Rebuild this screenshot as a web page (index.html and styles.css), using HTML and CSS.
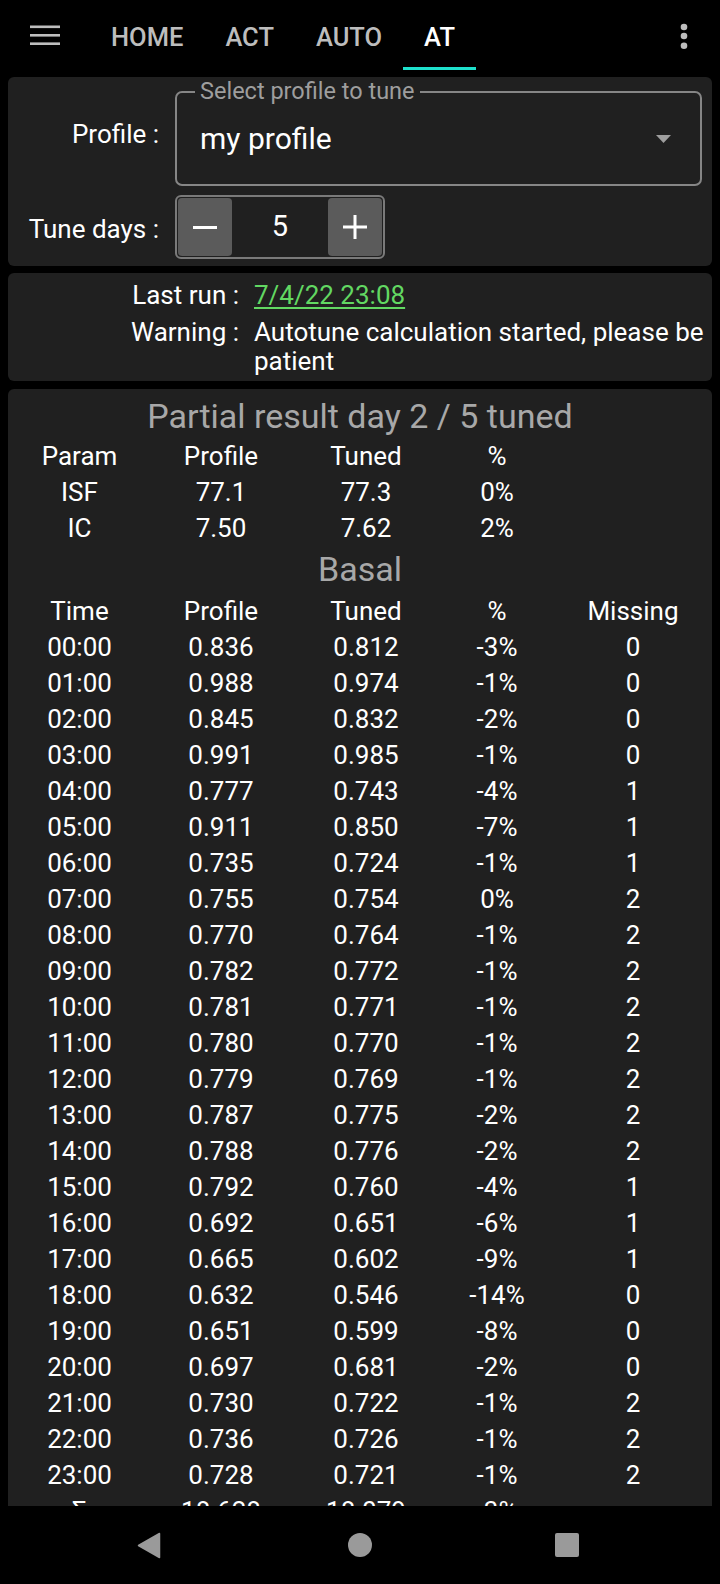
FILE: index.html
```html
<!DOCTYPE html>
<html>
<head>
<meta charset="utf-8">
<title>Autotune</title>
<link rel="stylesheet" href="styles.css">
</head>
<body>
<div class="screen">
  <header class="appbar">
    <div class="menu">
      <svg width="30" height="20" viewBox="0 0 30 20"><rect x="0" y="0.5" width="30" height="2.6" fill="#bdbdbd"/><rect x="0" y="9" width="30" height="2.6" fill="#bdbdbd"/><rect x="0" y="17.4" width="30" height="2.6" fill="#bdbdbd"/></svg>
    </div>
    <nav class="tabs">
      <div class="tab">HOME</div>
      <div class="tab">ACT</div>
      <div class="tab">AUTO</div>
      <div class="tab active">AT</div>
    </nav>
    <div class="more">
      <svg width="8" height="30" viewBox="0 0 8 30"><circle cx="4" cy="5" r="3.3" fill="#bdbdbd"/><circle cx="4" cy="14" r="3.3" fill="#bdbdbd"/><circle cx="4" cy="23.7" r="3.3" fill="#bdbdbd"/></svg>
    </div>
  </header>

  <main class="content">
    <section class="card card-tune">
      <div class="label lbl-profile">Profile :</div>
      <div class="field">
        <span class="field-label">Select profile to tune</span>
        <span class="field-value">my profile</span>
        <svg class="caret" width="15" height="8" viewBox="0 0 15 8"><path d="M0 0 H15 L7.5 8 Z" fill="#9e9e9e"/></svg>
      </div>
      <div class="label lbl-days">Tune days :</div>
      <div class="stepper">
        <div class="step-btn"><svg width="24" height="3" viewBox="0 0 24 3"><rect width="24" height="3" fill="#fff"/></svg></div>
        <div class="step-val">5</div>
        <div class="step-btn"><svg width="24" height="24" viewBox="0 0 24 24"><rect x="0" y="10.5" width="24" height="3" fill="#fff"/><rect x="10.5" y="0" width="3" height="24" fill="#fff"/></svg></div>
      </div>
    </section>

    <section class="card card-info">
      <div class="info-label">Last run :</div>
      <div class="info-value"><span class="link">7/4/22 23:08</span></div>
      <div class="info-label">Warning :</div>
      <div class="info-value">Autotune calculation started, please be patient</div>
    </section>

    <section class="card card-result">
      <div class="title">Partial result day 2 / 5 tuned</div>
      <div class="tbl">
        <div>Param</div><div>Profile</div><div>Tuned</div><div>%</div><div></div>
        <div>ISF</div><div>77.1</div><div>77.3</div><div>0%</div><div></div>
        <div>IC</div><div>7.50</div><div>7.62</div><div>2%</div><div></div>
      </div>
      <div class="title basal">Basal</div>
      <div class="tbl">
        <div>Time</div><div>Profile</div><div>Tuned</div><div>%</div><div>Missing</div>
        <div>00:00</div><div>0.836</div><div>0.812</div><div>-3%</div><div>0</div>
        <div>01:00</div><div>0.988</div><div>0.974</div><div>-1%</div><div>0</div>
        <div>02:00</div><div>0.845</div><div>0.832</div><div>-2%</div><div>0</div>
        <div>03:00</div><div>0.991</div><div>0.985</div><div>-1%</div><div>0</div>
        <div>04:00</div><div>0.777</div><div>0.743</div><div>-4%</div><div>1</div>
        <div>05:00</div><div>0.911</div><div>0.850</div><div>-7%</div><div>1</div>
        <div>06:00</div><div>0.735</div><div>0.724</div><div>-1%</div><div>1</div>
        <div>07:00</div><div>0.755</div><div>0.754</div><div>0%</div><div>2</div>
        <div>08:00</div><div>0.770</div><div>0.764</div><div>-1%</div><div>2</div>
        <div>09:00</div><div>0.782</div><div>0.772</div><div>-1%</div><div>2</div>
        <div>10:00</div><div>0.781</div><div>0.771</div><div>-1%</div><div>2</div>
        <div>11:00</div><div>0.780</div><div>0.770</div><div>-1%</div><div>2</div>
        <div>12:00</div><div>0.779</div><div>0.769</div><div>-1%</div><div>2</div>
        <div>13:00</div><div>0.787</div><div>0.775</div><div>-2%</div><div>2</div>
        <div>14:00</div><div>0.788</div><div>0.776</div><div>-2%</div><div>2</div>
        <div>15:00</div><div>0.792</div><div>0.760</div><div>-4%</div><div>1</div>
        <div>16:00</div><div>0.692</div><div>0.651</div><div>-6%</div><div>1</div>
        <div>17:00</div><div>0.665</div><div>0.602</div><div>-9%</div><div>1</div>
        <div>18:00</div><div>0.632</div><div>0.546</div><div>-14%</div><div>0</div>
        <div>19:00</div><div>0.651</div><div>0.599</div><div>-8%</div><div>0</div>
        <div>20:00</div><div>0.697</div><div>0.681</div><div>-2%</div><div>0</div>
        <div>21:00</div><div>0.730</div><div>0.722</div><div>-1%</div><div>2</div>
        <div>22:00</div><div>0.736</div><div>0.726</div><div>-1%</div><div>2</div>
        <div>23:00</div><div>0.728</div><div>0.721</div><div>-1%</div><div>2</div>
        <div>Σ</div><div>18.628</div><div>18.079</div><div>-3%</div><div></div>
      </div>
    </section>
  </main>

  <footer class="sysnav">
    <svg class="nav-back" width="24" height="27" viewBox="0 0 24 27"><path d="M1.5 13.5 L22.5 1.5 V25.5 Z" fill="#9a9a9a" stroke="#9a9a9a" stroke-width="1.5" stroke-linejoin="round"/></svg>
    <span class="nav-home"></span>
    <span class="nav-recent"></span>
  </footer>
</div>
</body>
</html>
```

FILE: styles.css
```css
* { box-sizing: border-box; }

html, body {
  margin: 0;
  padding: 0;
  background: #000;
}

body {
  font-family: Roboto, "Noto Sans", "Liberation Sans", sans-serif;
  color: #fff;
}

.screen {
  width: 720px;
  height: 1584px;
  display: flex;
  flex-direction: column;
  overflow: hidden;
  background: #000;
}

/* ---------- app bar ---------- */
.appbar {
  height: 70px;
  flex: 0 0 70px;
  display: flex;
  align-items: flex-start;
}

.menu {
  width: 90px;
  padding: 24.5px 0 0 30px;
}

.menu svg { display: block; }

.tabs {
  display: flex;
  height: 70px;
}

.tab {
  height: 70px;
  padding: 22px 21px 0;
  font-size: 25.5px;
  font-weight: 500;
  line-height: normal;
  color: #bdbdbd;
  border-bottom: 3px solid transparent;
}

.tab.active {
  color: #fff;
  border-bottom-color: #1ee0cc;
}

.more {
  margin-left: auto;
  margin-right: 32px;
  padding-top: 22px;
}

.more svg { display: block; }

/* ---------- content ---------- */
.content {
  flex: 1 1 auto;
  overflow: hidden;
  padding: 7px 8px 0;
}

.card {
  background: #202020;
  border-radius: 6px;
}

/* card 1 */
.card-tune {
  display: grid;
  grid-template-columns: 151px 527px;
  grid-template-rows: 95px 64px;
  column-gap: 16px;
  row-gap: 9px;
  padding: 14px 10px 7px 0;
  margin-bottom: 7px;
}

.label {
  text-align: right;
  font-size: 26px;
  line-height: normal;
  color: #fff;
}

.lbl-profile { margin-top: 28px; }
.lbl-days { margin-top: 19px; }

.field {
  position: relative;
  height: 95px;
  border: 2px solid #868686;
  border-radius: 7px;
  display: flex;
  align-items: center;
  padding-left: 23px;
}

.field-label {
  position: absolute;
  top: -15px;
  left: 18px;
  padding: 0 5px;
  background: #202020;
  font-size: 23.5px;
  line-height: 27px;
  color: #9e9e9e;
}

.field-value {
  font-size: 30px;
  line-height: normal;
  color: #fff;
}

.caret {
  display: block;
  margin-left: auto;
  margin-right: 29px;
}

.stepper {
  width: 210px;
  height: 64px;
  border: 2px solid #7a7a7a;
  border-radius: 6px;
  padding: 1px;
  display: flex;
}

.step-btn {
  width: 54px;
  background: #5b5b5b;
  border-radius: 4px;
  display: flex;
  align-items: center;
  justify-content: center;
}

.step-btn svg { display: block; }

.step-val {
  flex: 1;
  display: flex;
  align-items: center;
  justify-content: center;
  font-size: 29px;
  padding-bottom: 3px;
  color: #fff;
}

/* card 2 */
.card-info {
  display: grid;
  grid-template-columns: 231px 1fr;
  column-gap: 15px;
  row-gap: 8px;
  padding: 8px 1px 5px 0;
  margin-bottom: 8px;
  font-size: 26px;
  line-height: 29px;
}

.info-label {
  text-align: right;
  white-space: nowrap;
}

.link {
  color: #62d862;
  text-decoration: underline;
  text-decoration-thickness: 1.5px;
  text-underline-offset: 3px;
}

/* card 3 */
.card-result {
  padding: 5px 0 0 2px;
  border-bottom-left-radius: 0;
  border-bottom-right-radius: 0;
  height: 1200px;
}

.title {
  text-align: center;
  font-size: 34px;
  line-height: 44px;
  color: #a8a8a8;
  padding-right: 2px;
}

.title.basal {
  line-height: 47px;
}

.tbl {
  display: grid;
  grid-template-columns: 139px 144px 146px 116px 156px;
  font-size: 26px;
  line-height: 36px;
  text-align: center;
  color: #fff;
}

/* ---------- system nav ---------- */
.sysnav {
  flex: 0 0 78px;
  height: 78px;
  background: #000;
  display: flex;
  align-items: center;
  padding-left: 137px;
}

.nav-back { display: block; }

.nav-home {
  width: 24px;
  height: 24px;
  border-radius: 50%;
  background: #9a9a9a;
  margin-left: 187px;
}

.nav-recent {
  width: 24px;
  height: 24px;
  border-radius: 2px;
  background: #9a9a9a;
  margin-left: 183px;
}
```
